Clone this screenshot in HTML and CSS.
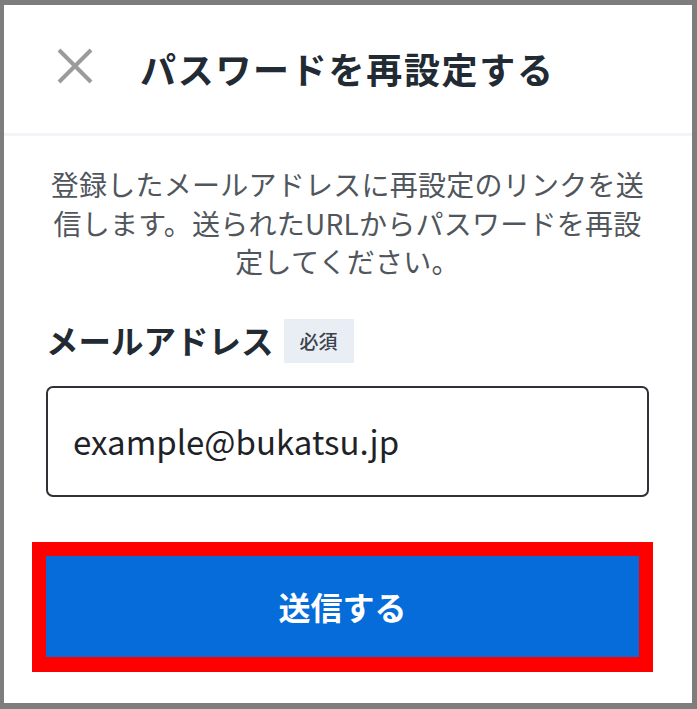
FILE: index.html
```html
<!DOCTYPE html>
<html lang="ja">
<head>
<meta charset="utf-8">
<title>パスワードを再設定する</title>
<link rel="stylesheet" href="styles.css">
</head>
<body>
<div class="frame">
  <header class="header">
    <svg class="close" width="36" height="36" viewBox="0 0 36 36" aria-hidden="true">
      <path d="M2 2 L34 34 M34 2 L2 34" stroke="#9b9b9b" stroke-width="4" fill="none"/>
    </svg>
    <h1 class="title">パスワードを再設定する</h1>
  </header>
  <main class="content">
    <p class="desc">登録したメールアドレスに再設定のリンクを送信します。送られたURLからパスワードを再設定してください。</p>
    <div class="label-row">
      <span class="label">メールアドレス</span>
      <span class="badge">必須</span>
    </div>
    <div class="input">example@bukatsu.jp</div>
    <div class="highlight">
      <button class="submit" type="button">送信する</button>
    </div>
  </main>
</div>
</body>
</html>
```
FILE: styles.css
```css
html, body {
  margin: 0;
  padding: 0;
  background: #ffffff;
}
body {
  font-family: "Noto Sans CJK JP", "Noto Sans", sans-serif;
}
.frame {
  box-sizing: border-box;
  width: 697px;
  height: 709px;
  border-style: solid;
  border-color: #7d7d7d;
  border-width: 5px 5px 6px 4px;
  background: #ffffff;
  display: flex;
  flex-direction: column;
}
.header {
  height: 128px;
  border-bottom: 3px solid #f2f4f7;
  display: flex;
  align-items: center;
  padding-left: 53px;
  gap: 47px;
}
.close {
  display: block;
  flex: none;
  margin-top: -6px;
}
.title {
  margin: 0;
  font-size: 36px;
  font-weight: 700;
  color: #222a33;
  letter-spacing: 1.7px;
  line-height: 1;
  margin-top: -2px;
}
.content {
  padding: 0 43px 0 42px;
  display: flex;
  flex-direction: column;
}
.desc {
  margin: 29px 0 0;
  font-size: 28px;
  letter-spacing: 0.25px;
  line-height: 38.5px;
  color: #50565c;
  text-align: center;
}
.label-row {
  margin-top: 38px;
  display: flex;
  align-items: center;
  gap: 10px;
  height: 44px;
}
.label {
  font-size: 32.5px;
  font-weight: 700;
  color: #222a33;
  line-height: 1;
}
.badge {
  background: #e9eef5;
  color: #3c434b;
  font-size: 19px;
  font-weight: 500;
  width: 70px;
  height: 44px;
  display: flex;
  align-items: center;
  justify-content: center;
}
.input {
  box-sizing: border-box;
  margin-top: 23px;
  height: 111px;
  border: 2px solid #2e3135;
  border-radius: 7px;
  display: flex;
  align-items: center;
  padding-left: 25px;
  font-size: 33px;
  color: #1e2226;
}
.highlight {
  margin: 45px -4px 0 -14px;
  border: 14px solid #ff0000;
  border-bottom-width: 15px;
  display: flex;
}
.submit {
  flex: 1;
  height: 101px;
  border: none;
  background: #056cd9;
  color: #ffffff;
  font-family: "Noto Sans CJK JP", "Noto Sans", sans-serif;
  font-size: 32px;
  font-weight: 700;
  padding: 0;
  cursor: pointer;
}
```
